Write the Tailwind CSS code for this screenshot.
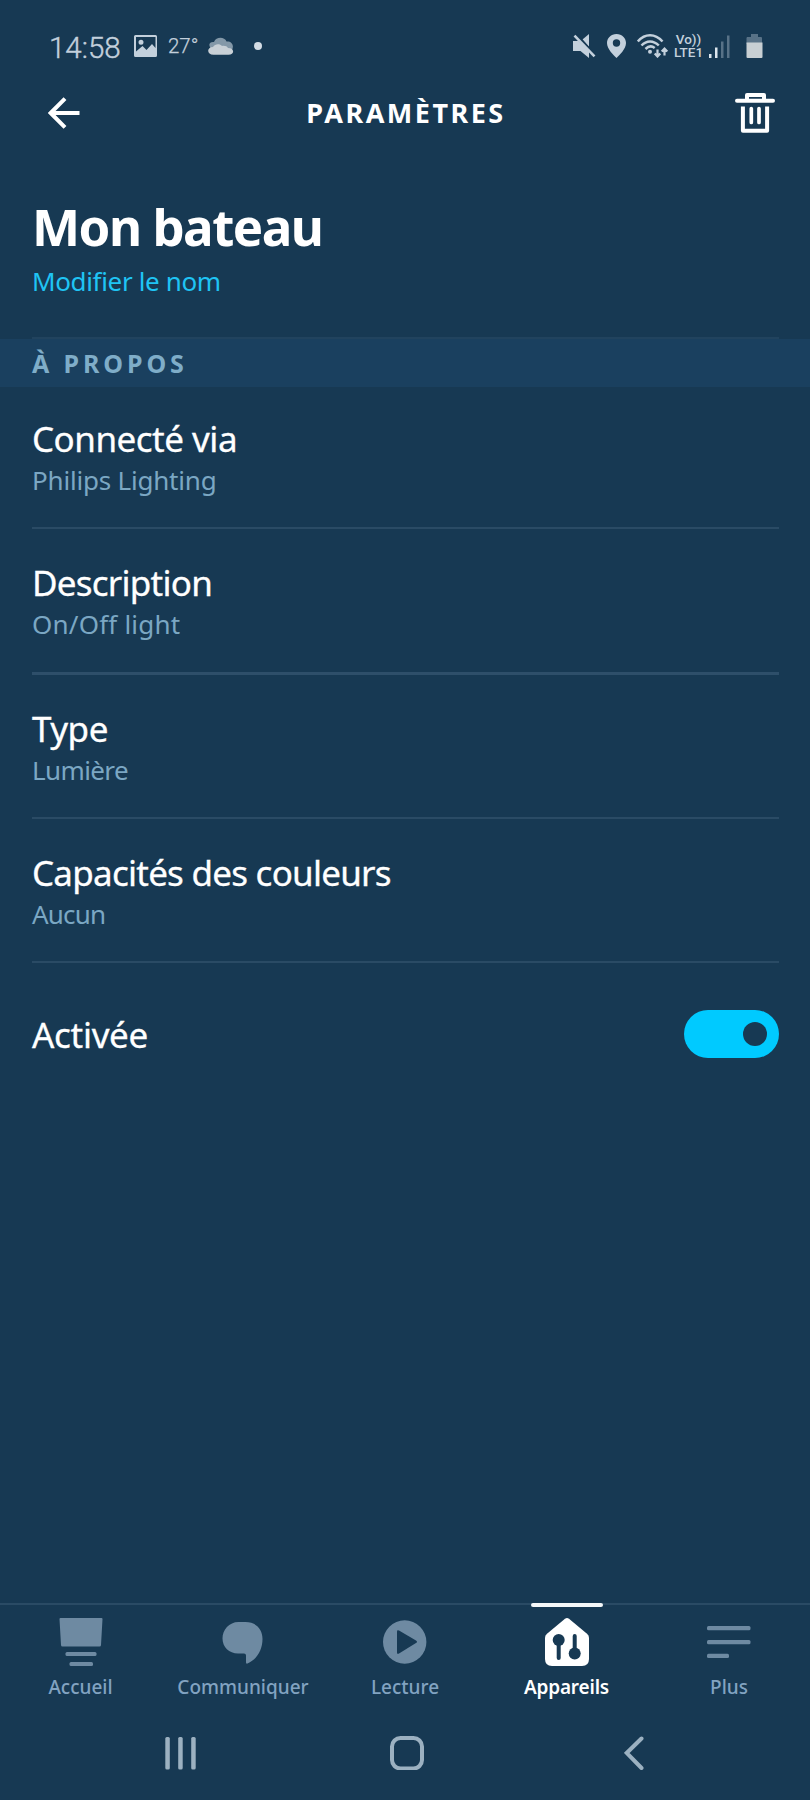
<!DOCTYPE html>
<html lang="fr">
<head>
    <meta charset="UTF-8">
    <meta name="viewport" content="width=device-width, initial-scale=1.0">
    <title>Paramètres</title>
    <script src="https://cdn.jsdelivr.net/npm/@tailwindcss/browser@4"></script>
</head>
<body class="bg-[#173953] text-white font-['Noto_Sans','Open_Sans',sans-serif]">

    <div class="w-[810px] h-[1800px] flex flex-col overflow-hidden">

        <!-- Barre d'état -->
        <div class="h-20 shrink-0 pt-[34px] flex items-start text-[#c3d0dc] font-[Roboto,sans-serif]">
            <span class="ml-[49px] w-[85px] text-[29.5px] leading-[28px] whitespace-nowrap font-light [-webkit-text-stroke:0.4px_#c3d0dc]">14:58</span>
            <svg class="w-6 h-6 shrink-0" viewBox="0 0 24 24">
                <path fill="#c3d0dc" fill-rule="evenodd" d="M1.500 1h20a1.500 1.500 0 0 1 1.500 1.500v19a1.500 1.500 0 0 1-1.500 1.500h-20a1.500 1.500 0 0 1-1.500-1.500v-19A1.500 1.500 0 0 1 1.500 1zM2 3v14.500l6.500-5.500 4 4 5.500-6 3.500 4V3zM7 5.700a2.500 2.500 0 1 1 0 5 2.500 2.500 0 0 1 0-5z"/>
            </svg>
            <span class="ml-[10px] w-[40px] text-[20.5px] leading-[25px] font-light [-webkit-text-stroke:0.25px_#c3d0dc]">27°</span>
            <svg class="w-[26px] h-6 shrink-0" viewBox="0 0 26 24">
                <path fill="#8398a8" d="M3 15C-.5 10 2 7.500 6 8c2-5.500 10.500-5.500 12.500-.5C23.500 7 26.500 11 24 16z"/>
                <path fill="#c8d0d6" d="M5.500 20.800c-7 0-7-7.800-.5-7.800 2-3.500 7-3.500 9-1 3-.5 5 .5 6 2 7 0 6.500 6.800.5 6.800z"/>
            </svg>
            <span class="ml-5 mt-2 size-2 rounded-full bg-[#d3dce4]"></span>

            <div class="ml-auto mr-[47px] flex items-start">
                <!-- Son coupé -->
                <svg class="w-[23px] h-6" viewBox="0 0 23 24" fill="#c3d0dc">
                    <path d="M9.500 5.500l6.500-5.500v13z"/>
                    <path d="M0 7h5.500l10.500 10v7L7.500 17H0z"/>
                    <path d="M3.500.6l19 20.300" stroke="#173953" stroke-width="2"/>
                    <path d="M1.500 1.700l20 20.600" stroke="#c3d0dc" stroke-width="2.600"/>
                </svg>
                <svg class="ml-[11px] w-5 h-6" viewBox="0 0 20 24">
                    <path fill="#c3d0dc" fill-rule="evenodd" d="M9.500 0C15 0 19 4 19 9c0 6-6.500 12-9.500 15C6.500 21 0 15 0 9c0-5 4-9 9.500-9zm0 5.300a3.700 3.700 0 1 0 0 7.400 3.700 3.700 0 0 0 0-7.400z"/>
                </svg>
                <svg class="ml-[10px] w-8 h-6" viewBox="0 0 32 24" fill="none" stroke="#c3d0dc" stroke-width="2.500">
                    <path d="M.8 7.500C8-.8 18-.8 25.500 7.500M4.500 11.500c5-5.500 12-5.500 17.300 0M8.500 15c2.800-2.800 6.300-3.300 9.200-1"/>
                    <circle cx="13" cy="17.700" r="2" fill="#c3d0dc" stroke="none"/>
                    <path d="M20.500 15.500v7M17.700 19.500l2.800 3 2.800-3M27.500 21.500v-7M24.700 17.500l2.800-3 2.800 3" stroke-width="2.200"/>
                </svg>
                <div class="ml-[3px] w-[33px] text-center text-[13.5px] leading-[13px] font-medium whitespace-nowrap -mt-px">
                    <p>Vo))</p>
                    <p>LTE1</p>
                </div>
                <svg class="ml-1 w-[21px] h-6" viewBox="0 0 21 24">
                    <path fill="#dce6ee" d="M0 20h2.500v4H0zM6 13.500h2.500V24H6z"/>
                    <path fill="#587287" d="M12 7.500h2.500V24H12zM18 1.500h2.500V24H18z"/>
                </svg>
                <svg class="ml-[16px] w-[17px] h-6" viewBox="0 0 17 24">
                    <path fill="#587287" d="M5 0h7v3h3.500l.5 1v6H.5V4L1 3h4z"/>
                    <path fill="#c8cfd3" d="M.5 8.500h16V23q0 1-1 1h-14q-1 0-1-1z"/>
                </svg>
            </div>
        </div>

        <!-- En-tête -->
        <header class="h-[70px] shrink-0 pl-12 pr-[35px] flex items-start justify-between">
            <svg class="mt-[17px] w-8 h-8" viewBox="0 0 32 32" fill="none" stroke="#fff" stroke-width="4">
                <path d="M2.500 16H31.500M17 1.700L2.700 16 17 30.300"/>
            </svg>
            <h1 class="mt-[13px] mr-[3px] text-[27px] leading-10 font-bold tracking-[2.5px]">PARAMÈTRES</h1>
            <svg class="mt-[13px] w-10 h-10" viewBox="0 0 40 40" fill="none" stroke="#fff" stroke-width="4">
                <path d="M2 7.800h36" stroke-linecap="round"/>
                <path d="M12 8V2h17V8M7.900 13.500v24.300h24.200V13.500" stroke-linejoin="round"/>
                <path d="M16.300 15.500v14M24 15.500v14" stroke-linecap="round" stroke-width="3.700"/>
            </svg>
        </header>

        <!-- Nom de l'appareil -->
        <section class="h-[189px] shrink-0 ml-8 mr-[31px] pt-[43px] border-b-2 border-[#21435e]">
            <h2 class="text-[51px] leading-[66px] font-bold tracking-[-1.5px]">Mon bateau</h2>
            <a href="#" class="block mt-[6px] text-[26px] leading-8 tracking-[-0.35px] text-[#1fc4f4]">Modifier le nom</a>
        </section>

        <h3 class="h-[48px] shrink-0 pl-8 pt-[8px] bg-[#1a405f] text-[#7fadc8] text-[25px] leading-8 font-bold tracking-[3.9px]">À PROPOS</h3>

        <ul class="ml-8 mr-[31px] shrink-0">
            <li class="h-[142px] pt-[30px] border-b-2 border-[#2a4b65]">
                <p class="text-[35px] leading-[44px] tracking-[-0.5px] [-webkit-text-stroke:0.3px_#fff]">Connecté via</p>
                <p class="mt-[3px] text-[26px] leading-8 tracking-[-0.2px] text-[#7ba7c3]">Philips Lighting</p>
            </li>
            <li class="h-[146px] pt-[32px] border-b-3 border-[#2e4f6a]">
                <p class="text-[35px] leading-[44px] tracking-[-0.75px] [-webkit-text-stroke:0.3px_#fff]">Description</p>
                <p class="mt-[3px] text-[26px] leading-8 tracking-[0.2px] text-[#7ba7c3]">On/Off light</p>
            </li>
            <li class="h-[144px] pt-[32px] border-b-2 border-[#2a4b65]">
                <p class="text-[35px] leading-[44px] tracking-[-0.5px] [-webkit-text-stroke:0.3px_#fff]">Type</p>
                <p class="mt-[3px] text-[26px] leading-8 tracking-[-0.6px] text-[#7ba7c3]">Lumière</p>
            </li>
            <li class="h-[144px] pt-[32px] border-b-2 border-[#2a4b65]">
                <p class="text-[35px] leading-[44px] tracking-[-0.75px] [-webkit-text-stroke:0.3px_#fff]">Capacités des couleurs</p>
                <p class="mt-[3px] text-[26px] leading-8 tracking-[-0.8px] text-[#7ba7c3]">Aucun</p>
            </li>
            <li class="pt-[47px] flex items-start justify-between">
                <p class="mt-[3px] text-[35px] leading-[44px] tracking-[-0.3px] [-webkit-text-stroke:0.3px_#fff]">Activée</p>
                <div class="w-[95px] h-[48px] rounded-full bg-[#00caff] flex items-center justify-end pr-[12px]">
                    <span class="size-6 rounded-full bg-[#173953]"></span>
                </div>
            </li>
        </ul>

        <!-- Navigation de l'application -->
        <nav class="mt-auto h-[117px] shrink-0 border-t-2 border-[#2a4b65] grid grid-cols-5 text-[#82a3c1] text-[19px] leading-[26px] font-medium">
            <a href="#" class="pt-[13px] pr-px flex flex-col items-center">
                <svg class="w-11 h-12" viewBox="0 0 44 48" fill="#6e8aa2">
                    <path d="M1.500 0h41q1 0 1 1l-1.500 26q0 1.500-1.500 1.500h-37Q2 28.500 2 27L.5 1q0-1 1-1z"/>
                    <rect x="6.500" y="34" width="31" height="4" rx="1.500"/>
                    <rect x="10.500" y="44" width="23.500" height="4" rx="1.500"/>
                </svg>
                <span class="mt-[8px]">Accueil</span>
            </a>
            <a href="#" class="pt-[13px] flex flex-col items-center">
                <svg class="w-11 h-12" viewBox="0 0 44 48" fill="#6e8aa2">
                    <path d="M17.500 4h7C35 4 41.500 11 41.500 21c0 11-6 21-15 24.500q-1.500.5-1.500-1v-7q0-2-2-2h-6C8 35.500 1.500 29 1.500 20.500S8 4 17.500 4z"/>
                </svg>
                <span class="mt-[8px]">Communiquer</span>
            </a>
            <a href="#" class="pt-[13px] flex flex-col items-center">
                <svg class="w-11 h-12" viewBox="0 0 44 48">
                    <circle cx="21.700" cy="24" r="21.700" fill="#6e8aa2"/>
                    <path fill="#173953" d="M14 13.500q0-2 2-1l17 10q2 1.300 0 2.600l-17 10.500q-2 1-2-1z"/>
                </svg>
                <span class="mt-[8px]">Lecture</span>
            </a>
            <a href="#" class="relative pt-[13px] pr-px flex flex-col items-center text-white font-semibold">
                <span class="absolute -top-[2px] left-[45px] w-[72px] h-1 rounded-sm bg-[#f4f8fa]"></span>
                <svg class="w-11 h-12" viewBox="0 0 44 48">
                    <path fill="#fff" d="M20 .8q2-1.600 4 0l18 15q2 1.700 2 4V41q0 7-7 7H7q-7 0-7-7V19.800q0-2.300 2-4z"/>
                    <g fill="#173953" stroke="#173953" stroke-width="4" stroke-linecap="round">
                        <circle cx="13.700" cy="22" r="6" stroke="none"/>
                        <path d="M13.700 23v17M29.700 18v17"/>
                        <circle cx="29.700" cy="35.500" r="6" stroke="none"/>
                    </g>
                </svg>
                <span class="mt-[8px] tracking-[-0.2px]">Appareils</span>
            </a>
            <a href="#" class="pt-[13px] flex flex-col items-center">
                <svg class="w-11 h-12" viewBox="0 0 44 48" fill="#6e8aa2">
                    <rect y="8" width="43.500" height="4.300" rx="1.500"/>
                    <rect y="22" width="43.500" height="4.300" rx="1.500"/>
                    <rect y="35.700" width="22" height="4.300" rx="1.500"/>
                </svg>
                <span class="mt-[8px]">Plus</span>
            </a>
        </nav>

        <!-- Boutons système -->
        <div class="h-20 shrink-0 pt-4 pl-[165px] flex">
            <svg class="w-8 h-[34px]" viewBox="0 0 32 34" fill="#9cb1c1">
                <rect x=".3" y="1" width="4.500" height="32.500" rx="1.500"/>
                <rect x="13.200" y="1" width="4.500" height="32.500" rx="1.500"/>
                <rect x="26.200" y="1" width="4.500" height="32.500" rx="1.500"/>
            </svg>
            <svg class="ml-[193px] w-[34px] h-[34px]" viewBox="0 0 34 34">
                <rect x="2" y="2" width="30" height="30.500" rx="8.500" fill="none" stroke="#9cb1c1" stroke-width="4"/>
            </svg>
            <svg class="ml-[200px] w-5 h-[34px]" viewBox="0 0 20 34">
                <path d="M17.500 2.500L2.700 17l14.800 15" fill="none" stroke="#9cb1c1" stroke-width="4" stroke-linecap="round"/>
            </svg>
        </div>
    </div>

</body>
</html>
